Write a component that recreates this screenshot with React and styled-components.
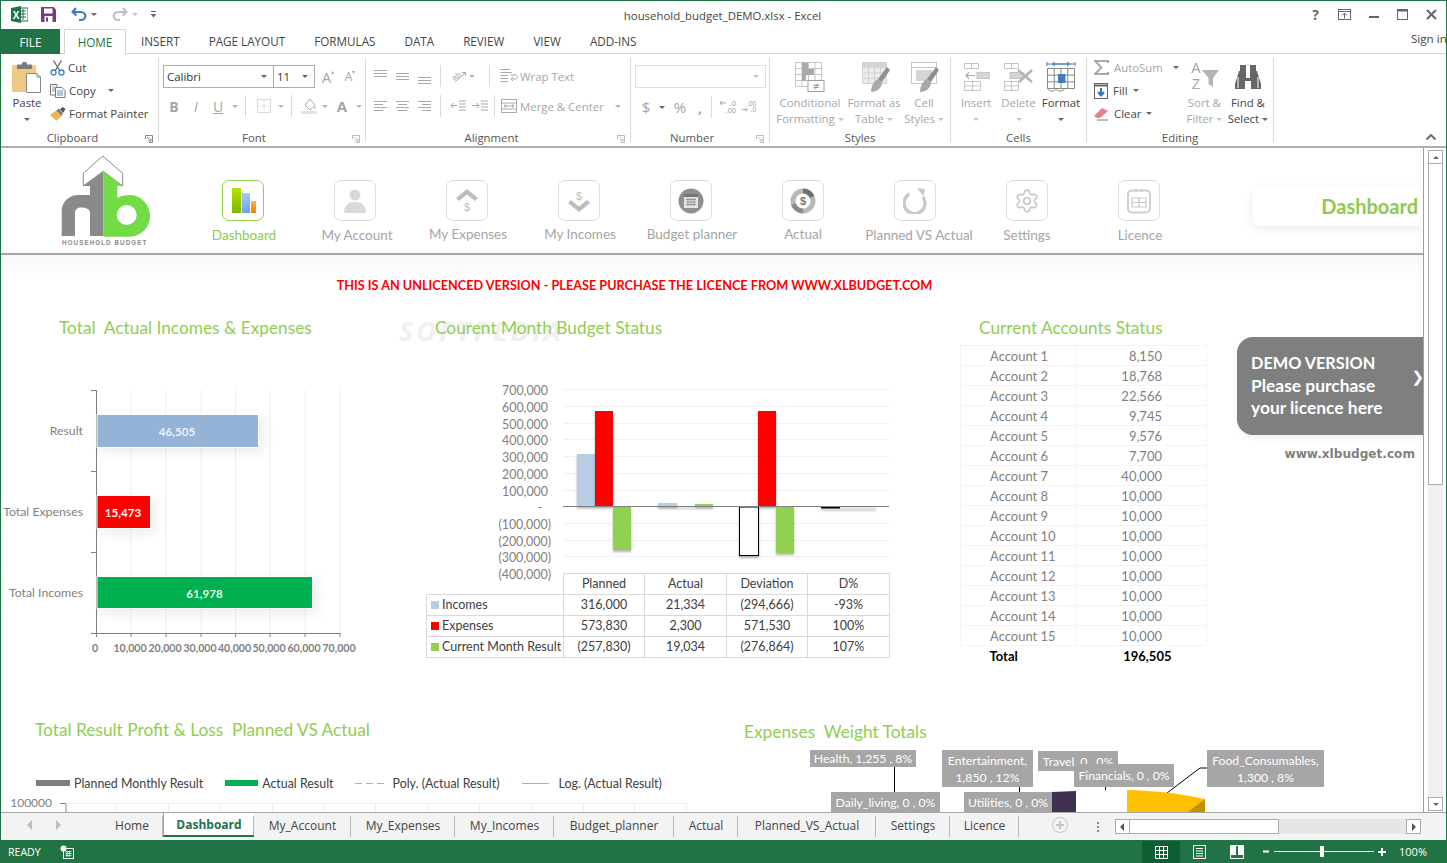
import React from "react";
import styled, { createGlobalStyle } from "styled-components";
import { Settings as GearIcon } from "lucide-react";

const UI = `"Open Sans", "Noto Sans", sans-serif`;
const CAL = `Lato, "Liberation Sans", sans-serif`;
const GREEN = "#217346";
const LIME = "#8fce51";

const Global = createGlobalStyle`
  html, body { margin: 0; padding: 0; background: #fff; overflow: hidden; }
  * { box-sizing: border-box; }
`;

const Frame = styled.div`
  width: 1447px; height: 863px; display: flex; flex-direction: column;
  border-top: 1px solid ${GREEN}; border-left: 1px solid ${GREEN}; border-right: 1px solid ${GREEN};
  background: #fff; font-family: ${UI}; overflow: hidden;
`;

/* title bar */
const TitleBar = styled.div`
  height: 26px; flex: none; display: grid; grid-template-columns: 1fr auto 1fr; align-items: center;
`;
const Qat = styled.div`display: flex; align-items: center; padding-left: 10px;`;
const QatBtn = styled.span`
  display: inline-flex; align-items: center; margin-left: ${p => p.$ml || 0}px; height: 18px;
`;
const DocTitle = styled.div`font-size: 11.4px; color: #444; position: relative; left: -1px; top: 1px;`;
const WinControls = styled.div`display: flex; justify-content: flex-end; align-items: center;`;
const WinBtn = styled.span`
  width: 29px; display: inline-flex; justify-content: center; align-items: center; color: #666;
  font-size: 14px; font-weight: 700; height: 18px;
`;

/* ribbon tabs */
const TabRow = styled.div`
  height: 27px; flex: none; display: flex; align-items: flex-end; border-bottom: 1px solid #d4d4d4; position: relative;
`;
const FileTab = styled.div`
  width: 59px; height: 25px; background: ${GREEN}; color: #fff; font-size: 11.7px; display: flex;
  align-items: center; justify-content: center; margin-bottom: -1px;
`;
const HomeTab = styled.div`
  width: 62px; height: 25px; margin-left: 4px; margin-bottom: -1px; background: #fff; color: ${GREEN};
  border: 1px solid #d4d4d4; border-bottom: 0; font-size: 11.7px; display: flex; align-items: center; justify-content: center;
`;
const RibbonTab = styled.div`
  font-size: 11.7px; color: #444; height: 25px; line-height: 26px; margin-left: 29px; white-space: nowrap;
`;
const TabList = styled.div`display: flex; margin-left: 15px; & > div:first-child { margin-left: 0; }`;
const SignIn = styled.div`
  margin-left: auto; font-size: 11.6px; color: #444; height: 27px; line-height: 25px; width: 35px; white-space: nowrap; overflow: hidden;
`;

/* ribbon */
const Ribbon = styled.div`
  height: 94px; flex: none; display: flex; padding-top: 4px; border-bottom: 2px solid #aeaeae; position: relative;
`;
const Group = styled.div`
  width: ${p => p.$w}px; height: 84px; flex: none; position: relative; display: flex; flex-direction: column;
  border-right: 1px solid #dadada;
`;
const GroupBody = styled.div`
  height: 72px; flex: none; display: flex; padding-left: ${p => p.$pl || 0}px;
`;
const GroupLabel = styled.div`
  height: 16px; flex: none; line-height: 16px; text-align: center; font-size: 11.4px; color: #555; padding-right: ${p => p.$pr || 0}px;
`;
const Launcher = styled.svg`position: absolute; right: 5px; bottom: -1px; width: 8px; height: 8px;`;
const Collapse = styled.svg`position: absolute; right: 9px; bottom: 5px; width: 12px; height: 8px;`;

const Caret = styled.span`
  display: inline-block; width: 0; height: 0; flex: none;
  border-left: 3px solid transparent; border-right: 3px solid transparent;
  border-top: 3px solid ${p => p.$c || "#666"};
  margin-left: ${p => p.$ml || 0}px;
`;
const BigBtn = styled.div`
  width: ${p => p.$w}px; flex: none; display: flex; flex-direction: column; align-items: center; position: relative;
  color: ${p => p.$off ? "#a6a6a6" : "#444"}; font-size: 11.4px; line-height: 16px; text-align: center; white-space: nowrap;
  margin-left: ${p => p.$ml || 0}px;
`;
const BigIcon = styled.div`height: 35px; margin-top: 2px; padding-top: ${p => p.$pt ?? 1}px; display: flex; align-items: flex-start; justify-content: center;`;
const BigText = styled.div`display: flex; align-items: center; justify-content: center; gap: 3px; height: 16px;`;
const SmallCol = styled.div`display: flex; flex-direction: column; margin-top: -2px; margin-left: ${p => p.$ml || 0}px;`;
const SmallBtn = styled.div`
  height: 23px; display: flex; align-items: center; gap: ${p => p.$gap ?? 3}px; font-size: 11.4px; white-space: nowrap;
  color: ${p => p.$off ? "#a6a6a6" : "#444"};
`;
const ToolCol = styled.div`display: flex; flex-direction: column;`;
const ToolRow = styled.div`
  display: flex; align-items: center; height: ${p => p.$h || 22}px; margin-top: ${p => p.$mt || 0}px;
`;
const Cell = styled.span`
  width: ${p => p.$w || 22}px; height: 20px; flex: none; display: inline-flex; align-items: center; justify-content: center;
  color: ${p => p.$c || "#a6a6a6"}; font-size: ${p => p.$fs || 12}px; font-weight: ${p => p.$b ? 700 : 400};
  font-style: ${p => p.$i ? "italic" : "normal"}; text-decoration: ${p => p.$u ? "underline" : "none"};
  margin-left: ${p => p.$ml || 0}px;
`;
const Tick = styled.span`font-size: 6px; align-self: flex-start; margin-top: 1px;`;
const VSep = styled.span`
  width: 1px; height: 22px; background: #dadada; flex: none;
  margin: 0 ${p => p.$r ?? p.$m ?? 4}px 0 ${p => p.$m ?? 4}px;
`;
const Combo = styled.div`
  width: ${p => p.$w}px; height: 23px; border: 1px solid ${p => p.$light ? "#dfdfdf" : "#ababab"}; margin-left: ${p => p.$ml || 0}px;
  display: flex; align-items: center; justify-content: ${p => p.$end ? "flex-end" : "space-between"}; padding: 0 6px 0 3px; font-size: 11.4px; color: #333; background: #fff;
`;
const ToolLabel = styled.span`font-size: 11.4px; color: #a6a6a6; white-space: nowrap; margin-left: ${p => p.$ml || 0}px; margin-right: ${p => p.$mr || 0}px;`;

/* sheet */
const Workspace = styled.div`flex: 1; min-height: 0; display: flex;`;
const Sheet = styled.div`
  width: 1423px; flex: none; border-right: 1px solid #9f9f9f; display: flex; flex-direction: column; overflow: hidden; font-family: ${CAL}; position: relative;
`;
const VBar = styled.div`
  flex: 1; display: flex; flex-direction: column; padding: 2px 3px 1px 4px; background: #fff;
`;
const VArrow = styled.div`
  height: 14px; flex: none; display: flex; align-items: center; justify-content: center; border: 1px solid #ababab; background: #fff;
`;
const VThumb = styled.div`height: 321px; flex: none; background: #fff; border: 1px solid #ababab; border-top: 0;`;
const VTrack = styled.div`flex: 1; background: #f0f0f0;`;

const Header = styled.header`
  height: 107px; flex: none; display: flex; border-bottom: 2px solid #a6a6a6;
`;
const LogoBox = styled.svg`width: 92px; height: 92px; margin: 7px 0 0 59px; flex: none; display: block;`;
const NavList = styled.nav`display: flex; margin-left: 35px;`;
const NavItem = styled.div`
  width: 112px; display: flex; flex-direction: column; align-items: center; padding-top: 32px; flex: none;
`;
const NavBox = styled.div`
  width: 42px; height: 41px; border-radius: 7px; border: 1px solid ${p => p.$on ? "#92d050" : "#dcdcdc"};
  display: flex; align-items: center; justify-content: center;
`;
const NavLabel = styled.div`
  margin-top: ${p => p.$mt ?? 5}px; padding-left: ${p => (p.$dx || 0) * 2}px; font-size: 13.5px; line-height: 18px; white-space: nowrap;
  color: ${p => p.$on ? "#8ccb50" : "#a5a5a5"};
`;
const Pill = styled.div`
  margin: 38px 0 0 auto; width: 171px; height: 40px; background: #fff; border-radius: 8px 0 0 8px;
  box-shadow: 0 3px 10px rgba(0,0,0,.08); display: flex; align-items: center; justify-content: flex-end; padding: 0 5px 1px 0;
  color: #8ccb50; font-size: 20px; font-weight: 700; flex: none;
`;
const Notice = styled.div`
  height: 60px; flex: none; padding-top: 20px; width: 100%;
  background: linear-gradient(#f8f8f8, #fff 20px);
`;
const NoticeText = styled.div`
  width: 1267px; text-align: center; color: #ff0000; font-weight: 700; font-size: 12.68px; line-height: 20px;
`;
const MainRow = styled.div`height: 400px; flex: none; display: flex;`;
const Col = styled.section`width: ${p => p.$w}px; flex: none; position: relative;`;
const Title = styled.h2`
  margin: 0; padding-left: ${p => p.$pl}px; height: ${p => p.$h || 26}px; line-height: ${p => p.$h || 26}px;
  font-size: 17.3px; font-weight: 400; color: ${LIME}; white-space: pre; position: relative;
`;
const Watermark = styled.div`
  position: absolute; left: -22px; top: -3px; color: #f0f0f0; font: 700 italic 27px ${UI}; letter-spacing: 3px;
`;
const TitleText = styled.span`position: relative;`;
const ChartSvg = styled.svg`display: block; margin-top: ${p => p.$mt || 0}px; overflow: visible;`;
const ShadowRect = styled.rect`filter: drop-shadow(4px 4px 6px rgba(0,0,0,.08));`;
const SmallShadowRect = styled.rect`filter: drop-shadow(0 2px 1px rgba(0,0,0,.3));`;

const DataTable = styled.table`
  border-collapse: collapse; margin-left: 5px; table-layout: fixed; width: 463px; font-size: 12.5px; color: #404040; position: relative;
  td, th { border: 1px solid #d9d9d9; padding: 0 0 2px; height: 21px; text-align: center; font-weight: 400; white-space: nowrap; }
  th:first-child { border-top: 0; border-left: 0; }
  td:first-child { text-align: left; padding-left: 4px; }
`;
const Swatch = styled.i`
  display: inline-block; width: 8px; height: 8px; background: ${p => p.$c}; margin-right: 3px; vertical-align: -0.5px;
`;
const Accounts = styled.table`
  border-collapse: collapse; table-layout: fixed; width: 246px; margin-top: 4px; font-size: 13px; color: #7f7f7f;
  td { height: 20px; padding: 0; border: 1px solid #f4f4f4; white-space: nowrap; }
  td:first-child { padding-left: 29px; }
  td:last-child { text-align: right; padding-right: 44px; }
  tr:last-child td { border: 0; color: #000; font-weight: 700; }
  tr:last-child td:last-child { padding-right: 35px; }
`;
const DemoCard = styled.div`
  margin-top: 22px; width: 186px; height: 98px; background: #7f7f7f; border-radius: 16px 0 0 16px; color: #fff;
  font-weight: 700; font-size: 17.4px; line-height: 22.5px; padding: 15px 0 0 14px; position: relative;
  box-shadow: 0 3px 6px rgba(0,0,0,.06);
`;
const DemoHead = styled.span`font-size: 16.3px;`;
const DemoChevron = styled.span`position: absolute; right: -1px; top: 31px; font: 700 15px "DejaVu Sans", sans-serif;`;
const SiteLink = styled.div`
  width: 178px; margin-top: 10px; text-align: right; font: 700 12.1px/18px "DejaVu Sans", sans-serif; color: #7f7f7f;
`;
const BottomRow = styled.div`flex: 1; min-height: 0; display: flex; overflow: hidden;`;
const Legend = styled.div`
  display: flex; align-items: center; height: 18px; margin: 29px 0 1px 35px; font-size: 12.4px; color: #404040; white-space: nowrap;
`;
const LegendKey = styled.span`
  width: ${p => p.$w}px; height: ${p => p.$h || 6}px; flex: none; background: ${p => p.$c || "transparent"};
  margin: 0 ${p => p.$r ?? 4}px 0 ${p => p.$l || 0}px;
`;
const PieStage = styled.div`position: relative; height: 97px; width: 100%;`;
const PieTitle = styled(Title)`position: absolute; left: 0; top: 4px;`;
const Callout = styled.div`
  position: absolute; left: ${p => p.$x - 701}px; top: ${p => p.$y - 715}px; width: ${p => p.$w}px; height: ${p => p.$h}px;
  background: #a6a6a6; color: #fff; font-size: 12.2px; line-height: 17px; text-align: center; white-space: nowrap;
  display: flex; align-items: center; justify-content: center;
`;
const PieSvg = styled.svg`position: absolute; left: 0; top: 0;`;

/* sheet tabs */
const TabsBar = styled.div`
  height: 28px; flex: none; background: #f3f3f3; border-top: 1px solid #a6a6a6; display: flex; align-items: flex-start; color: #444;
`;
const TabNav = styled.div`width: 100px; height: 24px; flex: none; display: flex; align-items: center; padding-left: 26px; gap: 22px;`;
const SheetTab = styled.div`
  width: ${p => p.$w}px; height: 24px; flex: none; position: relative; display: flex; align-items: center; justify-content: center;
  font-size: 12px; white-space: nowrap;
  ${p => p.$on ? `background:#fff; color:${GREEN}; font-weight:700; border-bottom:2px solid ${GREEN}; border-left:1px solid #a6a6a6;` : ""}
  &::after { content: ""; position: absolute; right: 0; top: 3px; bottom: 0; width: 1px; background: #b8b8b8; }
`;
const TabTools = styled.div`display: flex; align-items: center; height: 24px; flex: none;`;
const HScroll = styled.div`
  margin: 6px 0 0 0; width: 306px; height: 15px; display: flex; flex: none; background: #e6e6e6;
`;
const HBtn = styled.div`
  width: 15px; height: 15px; border: 1px solid #ababab; background: #fff; display: flex; align-items: center; justify-content: center; flex: none;
`;
const HThumb = styled.div`width: 149px; height: 15px; background: #fff; border: 1px solid #ababab; border-left: 0;`;
const HSpacer = styled.div`flex: 1;`;
const Plus = styled.div`
  width: 16px; height: 16px; border-radius: 50%; border: 1px solid #c6c6c6; color: #bdbdbd; margin-left: 33px;
  display: flex; align-items: center; justify-content: center;
`;
const Dots = styled.div`margin: 3px 16px 0 29px; width: 2px; height: 11px; background: radial-gradient(circle, #888 1px, transparent 1px) 0 0 / 2px 4px;`;

/* status */
const StatusBar = styled.div`
  height: 23px; flex: none; background: ${GREEN}; margin: 0 -1px; color: #fff; display: flex; align-items: center; font-size: 10.6px; position: relative;
`;
const Ready = styled.span`margin-left: 8px; width: 52px;`;
const StatusGap = styled.span`flex: 1;`;
const StatusEnd = styled.span`width: 20px; flex: none;`;
const ViewBtn = styled.span`
  width: 38px; height: 22px; display: flex; align-items: center; justify-content: center; flex: none; background: ${p => p.$on ? "#0f5d33" : "transparent"};
  margin-top: 1px;
`;
const Zoom = styled.div`display: flex; align-items: center; margin-left: 7px; flex: none;`;
const ZoomTrack = styled.div`width: 100px; height: 1px; background: #fff; margin: 0 4px; position: relative;`;
const ZoomThumb = styled.span`position: absolute; left: 46px; top: -5px; width: 4px; height: 11px; background: #fff;`;
const ZoomPct = styled.span`margin-left: 13px; font-size: 11px;`;

/* ---------------- icons ---------------- */
const I = ({ w = 16, h = 16, children, vb }) => (
  <svg width={w} height={h} viewBox={vb || `0 0 ${w} ${h}`} style={{ display: "block", flex: "none" }}>{children}</svg>
);
const Lines = ({ kind }) => {
  const g = "#a9a9a9";
  const map = {
    top: [[1, 2, 14], [1, 5, 14], [1, 8, 14]],
    mid: [[1, 5, 14], [1, 8, 14], [1, 11, 14]],
    bot: [[1, 9, 14], [1, 12, 14], [1, 15, 14]],
    left: [[1, 3, 14], [1, 6, 10], [1, 9, 14], [1, 12, 10]],
    center: [[1, 3, 14], [3, 6, 12], [1, 9, 14], [3, 12, 12]],
    right: [[1, 3, 14], [5, 6, 14], [1, 9, 14], [5, 12, 14]],
  };
  return <I>{map[kind].map(([a, y, b], i) => <line key={i} x1={a} x2={b} y1={y + .5} y2={y + .5} stroke={g} />)}</I>;
};
const Excel = () => (
  <I w={17} h={17}>
    <rect x="7" y="2" width="10" height="13" fill="#fff" stroke="#217346" />
    <path d="M9 5h6M9 8h6M9 11h6M12 3v11" stroke="#217346" />
    <path d="M0 2 L10 0 V17 L0 15Z" fill="#217346" />
    <text x="5" y="12.5" textAnchor="middle" fill="#fff" fontSize="10" fontWeight="700" fontFamily="Liberation Sans">X</text>
  </I>
);
const Save = () => (
  <I w={15} h={15}>
    <path d="M0 0H12.5L15 2.5V15H0Z" fill="#80397b" />
    <rect x="3" y="1.5" width="8.5" height="5" fill="#fff" />
    <rect x="3.5" y="9" width="8" height="6" fill="#fff" />
    <rect x="5" y="10.5" width="2" height="4" fill="#80397b" />
  </I>
);
const Undo = ({ c }) => (
  <I w={16} h={14}>
    <path d="M5 1 L1.5 5 L5.5 8.5" fill="none" stroke={c} strokeWidth="2" />
    <path d="M2 5 H9.5 C16 5 16 13 9.5 13 H8" fill="none" stroke={c} strokeWidth="2" />
  </I>
);
const Redo = ({ c }) => (
  <I w={16} h={14}>
    <path d="M11 1 L14.5 5 L10.5 8.5" fill="none" stroke={c} strokeWidth="2" />
    <path d="M14 5 H6.5 C0 5 0 13 6.5 13 H8" fill="none" stroke={c} strokeWidth="2" />
  </I>
);
const Paste = () => (
  <I w={30} h={32}>
    <rect x="0" y="3" width="24" height="27" rx="1.5" fill="#eec985" />
    <rect x="5" y="2.5" width="15" height="4.5" rx="1" fill="#7a7a7a" />
    <rect x="10" y="0" width="5" height="4" rx="1.5" fill="#7a7a7a" />
    <path d="M14.5 11.5H25L28.5 15V30.5H14.5Z" fill="#fff" stroke="#8a8a8a" />
    <path d="M25 11.5V15H28.5" fill="none" stroke="#8a8a8a" />
  </I>
);
const Cut = () => (
  <I w={15} h={16}>
    <path d="M11.5 0.5 L5 11 M3.5 0.5 L10 11" stroke="#666" strokeWidth="1.3" />
    <circle cx="3.5" cy="12.5" r="2.5" fill="none" stroke="#3f7fc1" strokeWidth="1.3" />
    <circle cx="11.5" cy="12.5" r="2.5" fill="none" stroke="#3f7fc1" strokeWidth="1.3" />
  </I>
);
const Copy = () => (
  <I w={16} h={14}>
    <path d="M.5.5H7V11H.5Z" fill="#fff" stroke="#777" />
    <path d="M2 3h3M2 5h3M2 7h3" stroke="#999" />
    <path d="M5.5 3.5H12L15 6.5V13.5H5.5Z" fill="#fff" stroke="#777" />
    <path d="M7 7h6M7 9h6M7 11h6" stroke="#5a93cf" />
  </I>
);
const Painter = () => (
  <I w={16} h={14}>
    <path d="M0 8 L7 3 L12 9 L6 14 C5 12 2 10 0 8Z" fill="#e8b456" />
    <path d="M6.5 3.5 L9 1.5 L13 7 L11.5 8.5Z" fill="#777" />
    <path d="M10 2 L13 0 L15.5 2 L13 6Z" fill="#555" />
  </I>
);
const Launch = ({ c = "#8a8a8a" }) => (
  <Launcher viewBox="0 0 8 8">
    <path d="M.5 4V.5H7.5V7.5H4" fill="none" stroke={c} />
    <path d="M2 2L6 6M6 3.5V6H3.5" fill="none" stroke={c} />
  </Launcher>
);
const Grid = ({ x, y, w, h, cols, rows, c = "#c4c4c4" }) => {
  const out = [];
  for (let i = 0; i <= cols; i++) out.push(<line key={"c" + i} x1={x + (w * i) / cols} x2={x + (w * i) / cols} y1={y} y2={y + h} stroke={c} />);
  for (let i = 0; i <= rows; i++) out.push(<line key={"r" + i} y1={y + (h * i) / rows} y2={y + (h * i) / rows} x1={x} x2={x + w} stroke={c} />);
  return <>{out}</>;
};
const CondFmt = () => (
  <I w={32} h={32}>
    <Grid x={1.5} y={1.5} w={26} h={24} cols={4} rows={4} />
    <rect x="8" y="2" width="6" height="6" fill="#a9a9a9" />
    <rect x="8" y="8" width="12" height="6" fill="#a9a9a9" />
    <rect x="8" y="14" width="4" height="6" fill="#a9a9a9" />
    <rect x="14" y="19.5" width="16" height="11" fill="#fff" stroke="#a0a0a0" />
    <text x="22" y="29" textAnchor="middle" fontSize="11" fill="#8a8a8a" fontFamily="Liberation Sans">≠</text>
  </I>
);
const Brush = ({ dx = 0 }) => (
  <g transform={`translate(${dx} 0)`}>
    <path d="M13 31C13 24 17 19 20 18L24 21C24 27 19 31 13 31Z" fill="#a9a9a9" />
    <path d="M29 6L32 9L24 21L20 18Z" fill="#8f8f8f" />
  </g>
);
const FmtTable = () => (
  <I w={32} h={32}>
    <rect x="4.5" y="1.5" width="24" height="5" fill="#d5d5d5" />
    <rect x="4.5" y="6.5" width="24" height="16" fill="#ececec" />
    <Grid x={4.5} y={1.5} w={24} h={21} cols={4} rows={4} c="#d2d2d2" />
    <Brush />
  </I>
);
const CellStyle = () => (
  <I w={32} h={32}>
    <rect x="3.5" y="1.5" width="25" height="21" fill="#fff" stroke="#c8c8c8" />
    <path d="M3.5 6.5H28.5" stroke="#c8c8c8" />
    <rect x="8" y="9" width="16" height="11" fill="#d5d5d5" />
    <Brush dx={-1} />
  </I>
);
const CellIns = () => (
  <I w={27} h={32}>
    <Grid x={1.5} y={2.5} w={14} h={5} cols={2} rows={1} />
    <rect x="14" y="11.5" width="13" height="6" fill="#d5d5d5" stroke="#c4c4c4" />
    <path d="M3 14.5H12M6 11.5L3 14.5L6 17.5" fill="none" stroke="#a9a9a9" strokeWidth="1.2" />
    <Grid x={1.5} y={20.5} w={16} h={9} cols={2} rows={2} />
  </I>
);
const CellDel = () => (
  <I w={31} h={32}>
    <Grid x={1.5} y={2.5} w={14} h={5} cols={2} rows={1} />
    <rect x="7" y="11.5" width="13" height="6" fill="#d5d5d5" stroke="#c4c4c4" />
    <Grid x={1.5} y={20.5} w={14} h={9} cols={2} rows={2} />
    <path d="M15 9 L29 21 M29 9 L16 21" stroke="#b5b5b5" strokeWidth="2.4" />
  </I>
);
const CellFmt = () => (
  <I w={30} h={32}>
    <path d="M1 3H29M1 1V5M29 1V5" stroke="#3f7fc1" strokeWidth="1" fill="none" />
    <path d="M7 3H23M9 1L6 3L9 5M21 1L24 3L21 5" stroke="#3f7fc1" fill="none" />
    <Grid x={1.5} y={7.5} w={27} h={20} cols={4} rows={3} c="#888" />
    <rect x="12" y="13" width="7.5" height="9" fill="#3f7fc1" />
    <path d="M1.5 27.5 C3 31 9 31 10 27.5 C11 31 17 31 19 27.5" fill="none" stroke="#888" />
  </I>
);
const Sigma = () => (
  <I w={15} h={15}><path d="M14 3V1H1L7.5 7.5L1 14H14V12" fill="none" stroke="#a9a9a9" strokeWidth="2" /></I>
);
const Fill = () => (
  <I w={14} h={16}>
    <rect x=".5" y=".5" width="13" height="15" fill="#fff" stroke="#666" />
    <path d="M.5 2.5H13.5" stroke="#666" strokeWidth="2" />
    <path d="M7 5V12M4 9L7 12.5L10 9" stroke="#2f75b5" strokeWidth="2" fill="none" />
  </I>
);
const Eraser = () => (
  <I w={15} h={14}>
    <path d="M0 9 L8 1 L14 4 L6 11 L3 11Z" fill="#e9808f" />
    <path d="M3 13H14" stroke="#777" />
  </I>
);
const Sort = () => (
  <I w={31} h={30}>
    <text x="7" y="12" textAnchor="middle" fontSize="14" fill="#a6a6a6" fontFamily="Liberation Sans">A</text>
    <text x="7" y="28" textAnchor="middle" fontSize="14" fill="#a6a6a6" fontFamily="Liberation Sans">Z</text>
    <path d="M13 9H30L24 17V26L19.5 23V17Z" fill="#b5b5b5" />
  </I>
);
const Binoc = () => (
  <I w={28} h={26}>
    <g fill="#666">
      <rect x="6" y="1" width="6" height="6" />
      <rect x="16" y="1" width="6" height="6" />
      <path d="M5 7H12V14H16V7H23L27 20V25H17V17H11V25H1V20Z" />
    </g>
    <path d="M4 13V24M24 13V24" stroke="#fff" strokeWidth="1" />
  </I>
);
const DecIcon = ({ flip }) => (
  <svg width="20" height="18" viewBox="0 0 20 18" style={{ display: "block" }}>
    <text x="18" y="8" textAnchor="end" fontSize="7.5" fill="#a0a0a0" fontFamily="Liberation Sans">{flip ? ".00" : ".0"}</text>
    <text x="18" y="15" textAnchor="end" fontSize="7.5" fill="#a0a0a0" fontFamily="Liberation Sans">{flip ? ".0" : ".00"}</text>
    {flip
      ? <path d="M2 12H8M6 10L8 12L6 14" stroke="#a0a0a0" fill="none" />
      : <path d="M2 5H8M4 3L2 5L4 7" stroke="#a0a0a0" fill="none" />}
  </svg>
);

const Logo = () => (
  <LogoBox viewBox="0 0 92 92">
    <path d="M23.3 18.3L42.7 1L62.7 18.3V31L43.3 16.3L23.3 31Z" fill="#fff" stroke="#6a6a6a" strokeWidth=".8" />
    <path fillRule="evenodd" fill="#8a8a8a"
      d="M43.3 16.3 L23.3 31 H30 V40 H18 C9 40 1.7 47 1.7 56 V81 H15 V58 C15 54.5 17.5 52.5 21 52.5 C26 52.5 30 54 30 58 V81 H43.3Z" />
    <path fill="#72dc46" fillRule="evenodd"
      d="M43.3 16.3 L62.7 31 H57.3 V43 C60.5 41 64.5 40 69.5 40 C81 40 90 49.5 90 61 C90 72.5 81 81.7 69.5 81.7 H43.3Z M66.7 50 A10 10 0 1 0 66.7 70 A10 10 0 1 0 66.7 50Z" />
    <text x="2" y="89.5" fontSize="6.3" fontWeight="800" letterSpacing="1.05" fill="#8a8a8a" fontFamily="Liberation Sans">HOUSEHOLD BUDGET</text>
  </LogoBox>
);

const NavIcons = {
  dash: (
    <I w={26} h={26}>
      <defs>
        <linearGradient id="gb" x1="0" x2="0" y1="0" y2="1"><stop offset="0" stopColor="#b8e000" /><stop offset="1" stopColor="#7ab800" /></linearGradient>
        <linearGradient id="bb" x1="0" x2="0" y1="0" y2="1"><stop offset="0" stopColor="#a9c9f5" /><stop offset="1" stopColor="#6f9fe8" /></linearGradient>
        <linearGradient id="ob" x1="0" x2="0" y1="0" y2="1"><stop offset="0" stopColor="#ffb347" /><stop offset="1" stopColor="#f57c00" /></linearGradient>
      </defs>
      <rect x="2" y="0" width="9" height="25" fill="url(#gb)" />
      <rect x="12" y="5" width="8" height="20" fill="url(#bb)" />
      <rect x="21" y="13" width="5" height="12" fill="url(#ob)" />
    </I>
  ),
  person: (
    <I w={24} h={26}>
      <circle cx="12" cy="7" r="5.5" fill="#d9d9d9" />
      <path d="M1 25 C1 17 6 14 12 14 C18 14 23 17 23 25Z" fill="#d9d9d9" />
    </I>
  ),
  up: (
    <I w={24} h={24}>
      <path d="M1 9 L12 0 L23 9 L20 12 L12 5.5 L4 12Z" fill="#bdbdbd" />
      <text x="12" y="22" fontSize="11" textAnchor="middle" fill="#bdbdbd" fontFamily="Liberation Sans">$</text>
    </I>
  ),
  down: (
    <I w={24} h={24}>
      <text x="12" y="11" fontSize="11" textAnchor="middle" fill="#bdbdbd" fontFamily="Liberation Sans">$</text>
      <path d="M1 14 L12 23 L23 14 L20 11 L12 17.5 L4 11Z" fill="#bdbdbd" />
    </I>
  ),
  cal: (
    <I w={26} h={26}>
      <circle cx="13" cy="13" r="12.5" fill="#8f8f8f" />
      <rect x="6" y="6" width="14" height="14" fill="#e3e3e3" />
      <rect x="6" y="6" width="14" height="3" fill="#777" />
      <path d="M8 11.5h10M8 14h10M8 16.5h10M10 10v8M13 10v8M16 10v8" stroke="#8a8a8a" strokeWidth=".8" />
    </I>
  ),
  donut: (
    <I w={26} h={26}>
      <circle cx="13" cy="13" r="10" fill="none" stroke="#b9b9b9" strokeWidth="5" />
      <path d="M13 3 A10 10 0 0 1 22 9" fill="none" stroke="#707070" strokeWidth="5" />
      <path d="M3.5 16 A10 10 0 0 0 13 23" fill="none" stroke="#8a8a8a" strokeWidth="5" />
      <circle cx="13" cy="13" r="6" fill="#fff" />
      <text x="13" y="17" fontSize="11" fontWeight="700" textAnchor="middle" fill="#777" fontFamily="Liberation Sans">$</text>
    </I>
  ),
  back: (
    <I w={24} h={26}>
      <path d="M6.5 6 A10.5 10.5 0 1 0 20 9" fill="none" stroke="#c9c9c9" strokeWidth="3.4" />
      <path d="M14 0 L22 1 L20.5 8.5Z" fill="#c9c9c9" />
    </I>
  ),
  gear: <GearIcon size={26} color="#c7c7c7" strokeWidth={1.5} />,
  lic: (
    <I w={24} h={26}>
      <rect x="1" y="2.5" width="22" height="22" rx="4" fill="none" stroke="#cfcfcf" strokeWidth="2" />
      <path d="M5 10H19V19H5ZM5 14.5H19M12 10V19" fill="none" stroke="#c9c9c9" strokeWidth="1.2" />
      <path d="M9 1V4M15 1V4" stroke="#cfcfcf" strokeWidth="1.5" />
    </I>
  ),
};

const nav = [
  ["dash", "Dashboard", 1, 5],
  ["person", "My Account", 2, 5],
  ["up", "My Expenses", 1, 4],
  ["down", "My Incomes", 1, 4],
  ["cal", "Budget planner", 1, 4],
  ["donut", "Actual", 0, 4],
  ["back", "Planned VS Actual", 4, 5],
  ["gear", "Settings", 0, 5],
  ["lic", "Licence", 1, 5],
];

const accounts = [
  ["Account 1", "8,150"], ["Account 2", "18,768"], ["Account 3", "22,566"], ["Account 4", "9,745"], ["Account 5", "9,576"],
  ["Account 6", "7,700"], ["Account 7", "40,000"], ["Account 8", "10,000"], ["Account 9", "10,000"], ["Account 10", "10,000"],
  ["Account 11", "10,000"], ["Account 12", "10,000"], ["Account 13", "10,000"], ["Account 14", "10,000"], ["Account 15", "10,000"],
  ["Total", "196,505"],
];
const sheetTabs = [
  ["Home", 62], ["Dashboard", 91, true], ["My_Account", 97], ["My_Expenses", 104], ["My_Incomes", 99],
  ["Budget_planner", 120], ["Actual", 64], ["Planned_VS_Actual", 138], ["Settings", 74], ["Licence", 69],
];

const axisFont = { fontFamily: "Lato, sans-serif" };

const IncomeChart = () => {
  const xs = [96.5, 131, 166, 201, 235.5, 270, 305, 340];
  const labels = ["0", "10,000", "20,000", "30,000", "40,000", "50,000", "60,000", "70,000"];
  return (
    <ChartSvg $mt={39} width="420" height="300" viewBox="1 380 420 300" style={axisFont}>
      {xs.slice(1).map(x => <line key={x} x1={x} x2={x} y1="390" y2="633" stroke="#eeeeee" />)}
      <path d="M96.5 390V633.5H340.5" fill="none" stroke="#808080" />
      {[390, 471, 552, 633].map(y => <line key={y} x1="91" x2="96" y1={y + .5} y2={y + .5} stroke="#808080" />)}
      {xs.map(x => <line key={x} x1={x} x2={x} y1="633" y2="637" stroke="#808080" />)}
      <ShadowRect x="97" y="414.5" width="161.5" height="33" fill="#95b3d7" stroke="#fff" />
      <ShadowRect x="97" y="495.5" width="53.5" height="33" fill="#ff0000" stroke="#fff" />
      <ShadowRect x="97" y="576.5" width="215.5" height="32" fill="#00b050" stroke="#fff" />
      <g fontSize="12.3" fill="#7f7f7f" textAnchor="end">
        <text x="83" y="435">Result</text>
        <text x="83" y="516">Total Expenses</text>
        <text x="83" y="597">Total Incomes</text>
      </g>
      <g fontSize="11.6" fontWeight="700" fill="#fff" textAnchor="middle">
        <text x="177" y="436" fillOpacity=".85">46,505</text>
        <text x="123" y="517">15,473</text>
        <text x="204.5" y="598" fillOpacity=".9">61,978</text>
      </g>
      <g fontSize="10.6" fontWeight="700" fill="#7f7f7f" textAnchor="middle">
        {labels.map((l, i) => <text key={l} x={i === 0 ? 95 : xs[i] - 1} y="652">{l}</text>)}
      </g>
    </ChartSvg>
  );
};

const BudgetChart = () => {
  const ys = [389, 406, 423, 439, 456, 473, 490, 506.5, 523, 540, 556, 573];
  const lab = ["700,000", "600,000", "500,000", "400,000", "300,000", "200,000", "100,000", "-", "(100,000)", "(200,000)", "(300,000)", "(400,000)"];
  return (
    <ChartSvg $mt={39} width="539" height="193" viewBox="421 380 539 193" style={axisFont}>
      {ys.map(y => <line key={y} x1="563" x2="889" y1={y + .5} y2={y + .5} stroke="#f0f0f0" />)}
      <g fontSize="12.4" fill="#7f7f7f" textAnchor="end">
        {lab.map((l, i) => <text key={l} x={i > 7 ? 551 : i === 7 ? 542 : 548} y={ys[i] + 5.5}>{l}</text>)}
      </g>
      <SmallShadowRect x="577" y="454" width="18" height="52.5" fill="#b8cce4" />
      <SmallShadowRect x="595" y="411" width="18" height="95.5" fill="#ff0000" />
      <SmallShadowRect x="613" y="507" width="18" height="43" fill="#92d050" />
      <SmallShadowRect x="658" y="503" width="19" height="4" fill="#b8cce4" />
      <SmallShadowRect x="677" y="506" width="18" height="1" fill="#dddddd" />
      <SmallShadowRect x="695" y="504" width="18" height="3" fill="#92d050" />
      <SmallShadowRect x="739.5" y="507" width="19" height="48.5" fill="#fff" stroke="#000" />
      <SmallShadowRect x="758" y="411" width="18" height="95.5" fill="#ff0000" />
      <SmallShadowRect x="776" y="507" width="18" height="46" fill="#92d050" />
      <SmallShadowRect x="821" y="507" width="19" height="1.5" fill="#000" />
      <SmallShadowRect x="840" y="507" width="36" height="1.5" fill="#e8e8e8" />
      <line x1="563" x2="889" y1="506.5" y2="506.5" stroke="#808080" />
    </ChartSvg>
  );
};

export default function App() {
  return (
    <>
      <Global />
      <Frame>
        <TitleBar>
          <Qat>
            <QatBtn><Excel /></QatBtn>
            <QatBtn $ml={13}><Save /></QatBtn>
            <QatBtn $ml={15}><Undo c="#3f79b5" /></QatBtn>
            <QatBtn $ml={4}><Caret /></QatBtn>
            <QatBtn $ml={15}><Redo c="#bdbdbd" /></QatBtn>
            <QatBtn $ml={4}><Caret $c="#c6c6c6" /></QatBtn>
            <QatBtn $ml={12}>
              <I w={7} h={8}><path d="M1 1.5H6" stroke="#666" /><path d="M.5 4H6.5L3.5 7.5Z" fill="#666" /></I>
            </QatBtn>
          </Qat>
          <DocTitle>household_budget_DEMO.xlsx - Excel</DocTitle>
          <WinControls>
            <WinBtn>?</WinBtn>
            <WinBtn>
              <I w={13} h={11}><rect x=".5" y=".5" width="12" height="10" fill="none" stroke="#666" /><path d="M.5 2.5H12.5" stroke="#666" /><path d="M6.5 9.5V4.5M4 6.5L6.5 4L9 6.5" stroke="#666" fill="none" /></I>
            </WinBtn>
            <WinBtn><I w={10} h={10}><path d="M0 8H10" stroke="#666" strokeWidth="2" /></I></WinBtn>
            <WinBtn><I w={11} h={11}><rect x=".5" y=".5" width="10" height="10" fill="none" stroke="#666" /><path d="M0 1.5H11" stroke="#666" strokeWidth="2" /></I></WinBtn>
            <WinBtn><I w={11} h={11}><path d="M1 1L10 10M10 1L1 10" stroke="#666" strokeWidth="2" /></I></WinBtn>
          </WinControls>
        </TitleBar>

        <TabRow>
          <FileTab>FILE</FileTab>
          <HomeTab>HOME</HomeTab>
          <TabList>
            {["INSERT", "PAGE LAYOUT", "FORMULAS", "DATA", "REVIEW", "VIEW", "ADD-INS"].map(t => <RibbonTab key={t}>{t}</RibbonTab>)}
          </TabList>
          <SignIn>Sign in</SignIn>
        </TabRow>

        <Ribbon>
          <Group $w={158}>
            <GroupBody $pl={11}>
              <BigBtn $w={30}>
                <BigIcon $pt={2}><Paste /></BigIcon>
                <BigText>Paste</BigText>
                <BigText><Caret /></BigText>
              </BigBtn>
              <SmallCol $ml={8}>
                <SmallBtn><Cut /><span>Cut</span></SmallBtn>
                <SmallBtn><Copy /><span>Copy</span><Caret $ml={9} /></SmallBtn>
                <SmallBtn><Painter /><span>Format Painter</span></SmallBtn>
              </SmallCol>
            </GroupBody>
            <GroupLabel $pr={14}>Clipboard</GroupLabel>
            <Launch />
          </Group>

          <Group $w={207}>
            <GroupBody $pl={4}>
              <ToolCol>
                <ToolRow $h={23} $mt={7}>
                  <Combo $w={111}>Calibri<Caret /></Combo>
                  <Combo $w={42} $ml={-1}>11<Caret /></Combo>
                  <Cell $w={22} $fs={15} $ml={2}>A<Tick>▴</Tick></Cell>
                  <Cell $w={22} $fs={12}>A<Tick>▾</Tick></Cell>
                </ToolRow>
                <ToolRow $mt={7}>
                  <Cell $b $fs={14}>B</Cell>
                  <Cell $i $fs={14}>I</Cell>
                  <Cell $u $fs={14}>U</Cell>
                  <Cell $w={12}><Caret $c="#b5b5b5" /></Cell>
                  <VSep />
                  <Cell $w={22} $ml={3}>
                    <I w={14} h={14}><rect x=".5" y=".5" width="13" height="13" fill="none" stroke="#b5b5b5" strokeDasharray="1 1" /><path d="M7 1V13M1 7H13" stroke="#c9c9c9" strokeDasharray="1 1" /></I>
                  </Cell>
                  <Cell $w={12}><Caret $c="#b5b5b5" /></Cell>
                  <VSep />
                  <Cell $w={22} $ml={2}>
                    <I w={16} h={16}><path d="M4 7L9 1L14 7L9 12Z" fill="#fff" stroke="#aaa" /><path d="M14 8C15 10 15 11 14 11C13 11 13 10 14 8Z" fill="#aaa" /><rect x="0" y="13" width="16" height="3" fill="#e2e2e2" /></I>
                  </Cell>
                  <Cell $w={10}><Caret $c="#b5b5b5" /></Cell>
                  <Cell $w={24} $fs={15} $b>A</Cell>
                  <Cell $w={10}><Caret $c="#b5b5b5" /></Cell>
                </ToolRow>
              </ToolCol>
            </GroupBody>
            <GroupLabel $pr={16}>Font</GroupLabel>
            <Launch c="#bdbdbd" />
          </Group>

          <Group $w={265}>
            <GroupBody $pl={4}>
              <ToolCol>
                <ToolRow $mt={7}>
                  <Cell><Lines kind="top" /></Cell>
                  <Cell><Lines kind="mid" /></Cell>
                  <Cell><Lines kind="bot" /></Cell>
                  <VSep />
                  <Cell $w={20} $ml={4}>
                    <I w={16} h={14}>
                      <text x="1" y="10" fontSize="8" fill="#aaa" transform="rotate(-30 5 8)" fontFamily="Liberation Sans">ab</text>
                      <path d="M4 13L14 4M11 3.5L14.5 3.5L14.5 7" fill="none" stroke="#aaa" />
                    </I>
                  </Cell>
                  <Cell $w={6}><Caret $c="#b5b5b5" /></Cell>
                  <VSep $m={14} $r={10} />
                  <I w={19} h={14}>
                    <path d="M.5 .5H10M.5 3.5H12M.5 6.5H8M.5 9.5H8M.5 12.5H8" stroke="#a9a9a9" fill="none" />
                    <path d="M10 6H16C18 6 18 10 16 10H11M13 8L11 10L13 12" fill="none" stroke="#a9a9a9" />
                  </I>
                  <ToolLabel $ml={1}>Wrap Text</ToolLabel>
                </ToolRow>
                <ToolRow $mt={8}>
                  <Cell><Lines kind="left" /></Cell>
                  <Cell><Lines kind="center" /></Cell>
                  <Cell><Lines kind="right" /></Cell>
                  <VSep />
                  <Cell $w={22} $ml={2}>
                    <I w={16} h={14}><path d="M9 2H16M9 5H16M9 8H16M9 11H16" stroke="#a9a9a9" /><path d="M1 6.5H7M3.5 4L1 6.5L3.5 9" stroke="#a9a9a9" fill="none" /></I>
                  </Cell>
                  <Cell $w={22}>
                    <I w={16} h={14}><path d="M9 2H16M9 5H16M9 8H16M9 11H16" stroke="#a9a9a9" /><path d="M0 6.5H7M4.5 4L7 6.5L4.5 9" stroke="#a9a9a9" fill="none" /></I>
                  </Cell>
                  <VSep $m={3} $r={6} />
                  <I w={16} h={14}>
                    <rect x=".5" y=".5" width="15" height="13" fill="none" stroke="#a9a9a9" />
                    <path d="M.5 4H15.5M.5 10H15.5M3 7H13M3 7L5 5.5M3 7L5 8.5M13 7L11 5.5M13 7L11 8.5" stroke="#a9a9a9" fill="none" />
                  </I>
                  <ToolLabel $ml={3} $mr={11}>Merge &amp; Center</ToolLabel>
                  <Caret $c="#b5b5b5" />
                </ToolRow>
              </ToolCol>
            </GroupBody>
            <GroupLabel $pr={13}>Alignment</GroupLabel>
            <Launch c="#bdbdbd" />
          </Group>

          <Group $w={139}>
            <GroupBody $pl={4}>
              <ToolCol>
                <ToolRow $h={23} $mt={7}>
                  <Combo $w={131} $light $end><Caret $c="#c6c6c6" /></Combo>
                </ToolRow>
                <ToolRow $mt={8}>
                  <Cell $w={22} $fs={15}>$</Cell>
                  <Cell $w={10}><Caret /></Cell>
                  <Cell $w={26} $fs={15}>%</Cell>
                  <Cell $w={14} $fs={14} $b>,</Cell>
                  <VSep $m={4} />
                  <Cell $w={24}><DecIcon /></Cell>
                  <Cell $w={18}><DecIcon flip /></Cell>
                </ToolRow>
              </ToolCol>
            </GroupBody>
            <GroupLabel $pr={16}>Number</GroupLabel>
            <Launch c="#bdbdbd" />
          </Group>

          <Group $w={181}>
            <GroupBody $pl={6}>
              <BigBtn $w={68} $off><BigIcon><CondFmt /></BigIcon><BigText>Conditional</BigText><BigText>Formatting<Caret $c="#c6c6c6" /></BigText></BigBtn>
              <BigBtn $w={60} $off><BigIcon><FmtTable /></BigIcon><BigText>Format as</BigText><BigText>Table<Caret $c="#c6c6c6" /></BigText></BigBtn>
              <BigBtn $w={40} $off><BigIcon><CellStyle /></BigIcon><BigText>Cell</BigText><BigText>Styles<Caret $c="#c6c6c6" /></BigText></BigBtn>
            </GroupBody>
            <GroupLabel>Styles</GroupLabel>
          </Group>

          <Group $w={136}>
            <GroupBody $pl={4}>
              <BigBtn $w={42} $off><BigIcon><CellIns /></BigIcon><BigText>Insert</BigText><BigText><Caret $c="#c6c6c6" /></BigText></BigBtn>
              <BigBtn $w={43} $off><BigIcon><CellDel /></BigIcon><BigText>Delete</BigText><BigText><Caret $c="#c6c6c6" /></BigText></BigBtn>
              <BigBtn $w={42}><BigIcon><CellFmt /></BigIcon><BigText>Format</BigText><BigText><Caret /></BigText></BigBtn>
            </GroupBody>
            <GroupLabel>Cells</GroupLabel>
          </Group>

          <Group $w={187}>
            <GroupBody $pl={7}>
              <SmallCol>
                <SmallBtn $off $gap={5}><Sigma /><span>AutoSum</span><Caret $ml={5} /></SmallBtn>
                <SmallBtn $gap={5}><Fill /><span>Fill</span><Caret /></SmallBtn>
                <SmallBtn $gap={5}><Eraser /><span>Clear</span><Caret /></SmallBtn>
              </SmallCol>
              <BigBtn $w={39} $off $ml={6}><BigIcon><Sort /></BigIcon><BigText>Sort &amp;</BigText><BigText>Filter<Caret $c="#c6c6c6" /></BigText></BigBtn>
              <BigBtn $w={44} $ml={2}><BigIcon $pt={4}><Binoc /></BigIcon><BigText>Find &amp;</BigText><BigText>Select<Caret /></BigText></BigBtn>
            </GroupBody>
            <GroupLabel>Editing</GroupLabel>
          </Group>

          <Collapse viewBox="0 0 12 8"><path d="M1.5 6.5L6 2L10.5 6.5" fill="none" stroke="#666" strokeWidth="1.8" /></Collapse>
        </Ribbon>

        <Workspace>
          <Sheet>
            <Header>
              <Logo />
              <NavList>
                {nav.map(([k, l, dx, mt], i) => (
                  <NavItem key={k}>
                    <NavBox $on={i === 0}>{NavIcons[k]}</NavBox>
                    <NavLabel $on={i === 0} $dx={dx} $mt={mt}>{l}</NavLabel>
                  </NavItem>
                ))}
              </NavList>
              <Pill>Dashboard</Pill>
            </Header>
            <Notice>
              <NoticeText>THIS IS AN UNLICENCED VERSION - PLEASE PURCHASE THE LICENCE FROM WWW.XLBUDGET.COM</NoticeText>
            </Notice>
            <MainRow>
              <Col $w={420}>
                <Title $pl={58}>Total  Actual Incomes &amp; Expenses</Title>
                <IncomeChart />
              </Col>
              <Col $w={539}>
                <Title $pl={14}><Watermark>SOFTPEDIA</Watermark><TitleText>Courent Month Budget Status</TitleText></Title>
                <BudgetChart />
                <DataTable>
                  <colgroup><col style={{ width: 137 }} /><col style={{ width: 81 }} /><col style={{ width: 82 }} /><col style={{ width: 81 }} /><col style={{ width: 82 }} /></colgroup>
                  <thead><tr><th /><th>Planned</th><th>Actual</th><th>Deviation</th><th>D%</th></tr></thead>
                  <tbody>
                    <tr><td><Swatch $c="#b8cce4" />Incomes</td><td>316,000</td><td>21,334</td><td>(294,666)</td><td>-93%</td></tr>
                    <tr><td><Swatch $c="#ff0000" />Expenses</td><td>573,830</td><td>2,300</td><td>571,530</td><td>100%</td></tr>
                    <tr><td><Swatch $c="#92d050" />Current Month Result</td><td>(257,830)</td><td>19,034</td><td>(276,864)</td><td>107%</td></tr>
                  </tbody>
                </DataTable>
              </Col>
              <Col $w={277}>
                <Title $pl={19}>Current Accounts Status</Title>
                <Accounts>
                  <colgroup><col style={{ width: 116 }} /><col style={{ width: 130 }} /></colgroup>
                  <tbody>{accounts.map(([a, v]) => <tr key={a}><td>{a}</td><td>{v}</td></tr>)}</tbody>
                </Accounts>
              </Col>
              <Col $w={186}>
                <DemoCard>
                  <DemoHead>DEMO VERSION</DemoHead><br />Please purchase<br />your licence here
                  <DemoChevron>❯</DemoChevron>
                </DemoCard>
                <SiteLink>www.xlbudget.com</SiteLink>
              </Col>
            </MainRow>
            <BottomRow>
              <Col $w={700}>
                <Title $pl={34} $h={30}>Total Result Profit &amp; Loss  Planned VS Actual</Title>
                <Legend>
                  <LegendKey $w={34} $c="#7f7f7f" />Planned Monthly Result
                  <LegendKey $w={33} $c="#00b050" $l={22} />Actual Result
                  <LegendKey $w={30} $h={1} $c="repeating-linear-gradient(90deg,#92d050 0 7px,transparent 7px 11px)" $l={21} $r={8} />Poly. (Actual Result)
                  <LegendKey $w={27} $h={1} $c="#95b3d7" $l={22} $r={10} />Log. (Actual Result)
                </Legend>
                <ChartSvg width="700" height="20" viewBox="1 793 700 20" style={axisFont}>
                  <text x="52" y="807" fontSize="12" textAnchor="end" fill="#7f7f7f">100000</text>
                  <path d="M60 803.5H66V812" fill="none" stroke="#808080" />
                  <line x1="66" x2="686" y1="803.5" y2="803.5" stroke="#eeeeee" />
                  {[116, 168, 220, 272, 324, 375, 427, 479, 531, 583, 634, 686].map(x => <line key={x} x1={x + .5} x2={x + .5} y1="803" y2="812" stroke="#eeeeee" />)}
                </ChartSvg>
              </Col>
              <Col $w={721}>
                <PieStage>
                  <PieTitle $pl={43}>Expenses  Weight Totals</PieTitle>
                  <PieSvg width="721" height="97" viewBox="701 715 721 97">
                    <path d="M894.5 767V793M1019.5 787V793M1105.5 787V790M1207 768H1200L1167 793" fill="none" stroke="#000" />
                    <path d="M1052 792L1076 791V812H1052Z" fill="#403151" />
                    <path d="M1127 790C1155 790.5 1182 794 1205 799V812H1127Z" fill="#ffc000" />
                    <path d="M1205 799V812H1188Z" fill="#bf9000" />
                  </PieSvg>
                  <Callout $x={810} $y={750} $w={106} $h={17}><span>Health, 1,255 , 8%</span></Callout>
                  <Callout $x={831} $y={792} $w={109} $h={20}><span>Daily_living, 0 , 0%</span></Callout>
                  <Callout $x={942} $y={750} $w={91} $h={37}><span>Entertainment,<br />1,850 , 12%</span></Callout>
                  <Callout $x={964} $y={792} $w={88} $h={20}><span>Utilities, 0 , 0%</span></Callout>
                  <Callout $x={1038} $y={751} $w={80} $h={20}><span>Travel, 0 , 0%</span></Callout>
                  <Callout $x={1074} $y={764} $w={100} $h={23}><span>Financials, 0 , 0%</span></Callout>
                  <Callout $x={1207} $y={750} $w={117} $h={37}><span>Food_Consumables,<br />1,300 , 8%</span></Callout>
                </PieStage>
              </Col>
            </BottomRow>
          </Sheet>
          <VBar>
            <VArrow><Caret $c="#666" style={{ transform: "rotate(180deg)" }} /></VArrow>
            <VThumb />
            <VTrack />
            <VArrow><Caret $c="#666" /></VArrow>
          </VBar>
        </Workspace>

        <TabsBar>
          <TabNav>
            <I w={6} h={10}><path d="M5 0V10L0 5Z" fill="#bdbdbd" /></I>
            <I w={6} h={10}><path d="M1 0V10L6 5Z" fill="#bdbdbd" /></I>
          </TabNav>
          {sheetTabs.map(([t, w, on]) => <SheetTab key={t} $w={w} $on={on}>{t}</SheetTab>)}
          <TabTools>
            <Plus><I w={10} h={10}><path d="M5 1V9M1 5H9" stroke="#c6c6c6" strokeWidth="2" /></I></Plus>
            <Dots />
          </TabTools>
          <HScroll>
            <HBtn><I w={5} h={8}><path d="M4 0V8L0 4Z" fill="#555" /></I></HBtn>
            <HThumb />
            <HSpacer />
            <HBtn><I w={5} h={8}><path d="M1 0V8L5 4Z" fill="#555" /></I></HBtn>
          </HScroll>
        </TabsBar>

        <StatusBar>
          <Ready>READY</Ready>
          <I w={14} h={14}>
            <circle cx="3.5" cy="3.5" r="3" fill="#fff" />
            <rect x="3.5" y="3.5" width="10" height="10" fill="none" stroke="#fff" />
            <path d="M5.5 6.5h6M5.5 8.5h6M5.5 10.5h6M7 6v6M9.5 6v6" stroke="#fff" strokeWidth=".8" />
          </I>
          <StatusGap />
          <ViewBtn $on><I w={13} h={13}><path d="M.5.5H12.5V12.5H.5ZM4.5.5V12.5M8.5.5V12.5M.5 4.5H12.5M.5 8.5H12.5" fill="none" stroke="#fff" /></I></ViewBtn>
          <ViewBtn><I w={13} h={14}><path d="M.5.5H12.5V13.5H.5Z" fill="none" stroke="#fff" /><path d="M3 3.5H10M3 6H10M3 8.5H10M3 11H10" stroke="#fff" /></I></ViewBtn>
          <ViewBtn><I w={14} h={14}><path d="M.5.5H13.5V13.5H.5Z" fill="none" stroke="#fff" /><rect x="1" y="1" width="5" height="9" fill="#fff" /><rect x="8" y="1" width="5" height="9" fill="#fff" /></I></ViewBtn>
          <Zoom>
            <I w={7} h={7}><path d="M0 3.5H6" stroke="#fff" strokeWidth="2" /></I>
            <ZoomTrack><ZoomThumb /></ZoomTrack>
            <I w={8} h={8}><path d="M0 4H8M4 0V8" stroke="#fff" strokeWidth="2" /></I>
          </Zoom>
          <ZoomPct>100%</ZoomPct>
          <StatusEnd />
        </StatusBar>
      </Frame>
    </>
  );
}
